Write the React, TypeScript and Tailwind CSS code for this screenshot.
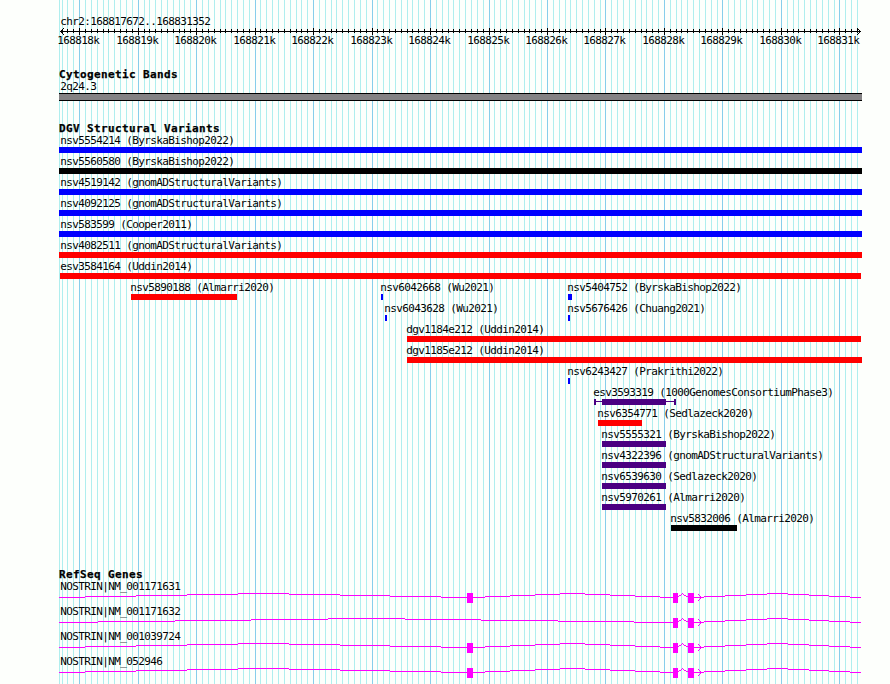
const REGION_START = 168817672;
const REGION_END = 168831352;
const toX = (pos: number) =>
  Math.round(60 + ((pos - REGION_START) * 800) / (REGION_END - REGION_START + 1));

const minorTicks = Array.from({ length: 137 }, (_, i) => 168817700 + i * 100);
const majorTicks = Array.from({ length: 14 }, (_, i) => 168818000 + i * 1000);

type Feature = {
  label: string;
  start: number;
  end: number;
  color: string;
  labelX?: number;
  whiskers?: [number, number];
};

const BLUE = "bg-[#0000ff]";
const RED = "bg-[#ff0000]";
const BLACK = "bg-black";
const INDIGO = "bg-[#4b0082]";

const variantRows: Feature[][] = [
  [{ label: "nsv5554214 (ByrskaBishop2022)", start: 59, end: 862, color: BLUE, labelX: 60 }],
  [{ label: "nsv5560580 (ByrskaBishop2022)", start: 59, end: 862, color: BLACK, labelX: 60 }],
  [{ label: "nsv4519142 (gnomADStructuralVariants)", start: 59, end: 862, color: BLUE, labelX: 60 }],
  [{ label: "nsv4092125 (gnomADStructuralVariants)", start: 59, end: 862, color: BLUE, labelX: 60 }],
  [{ label: "nsv583599 (Cooper2011)", start: 59, end: 862, color: BLUE, labelX: 60 }],
  [{ label: "nsv4082511 (gnomADStructuralVariants)", start: 59, end: 862, color: RED, labelX: 60 }],
  [{ label: "esv3584164 (Uddin2014)", start: 60, end: 861, color: RED, labelX: 60 }],
  [
    { label: "nsv5890188 (Almarri2020)", start: 131, end: 237, color: RED },
    { label: "nsv6042668 (Wu2021)", start: 381, end: 383, color: BLUE },
    { label: "nsv5404752 (ByrskaBishop2022)", start: 568, end: 572, color: BLUE },
  ],
  [
    { label: "nsv6043628 (Wu2021)", start: 385, end: 387, color: BLUE },
    { label: "nsv5676426 (Chuang2021)", start: 568, end: 570, color: BLUE },
  ],
  [{ label: "dgv1184e212 (Uddin2014)", start: 407, end: 861, color: RED }],
  [{ label: "dgv1185e212 (Uddin2014)", start: 407, end: 862, color: RED }],
  [{ label: "nsv6243427 (Prakrithi2022)", start: 568, end: 570, color: BLUE }],
  [
    {
      label: "esv3593319 (1000GenomesConsortiumPhase3)",
      start: 602,
      end: 666,
      color: INDIGO,
      labelX: 593,
      whiskers: [594, 676],
    },
  ],
  [{ label: "nsv6354771 (Sedlazeck2020)", start: 598, end: 642, color: RED }],
  [{ label: "nsv5555321 (ByrskaBishop2022)", start: 602, end: 666, color: INDIGO }],
  [{ label: "nsv4322396 (gnomADStructuralVariants)", start: 602, end: 666, color: INDIGO }],
  [{ label: "nsv6539630 (Sedlazeck2020)", start: 602, end: 666, color: INDIGO }],
  [{ label: "nsv5970261 (Almarri2020)", start: 602, end: 666, color: INDIGO }],
  [{ label: "nsv5832006 (Almarri2020)", start: 671, end: 737, color: BLACK }],
];

// Each intron is a shallow staircase: [x where the level begins, level].
const longIntron: [number, number][] = [
  [59, 4], [98, 3], [175, 2], [251, 1], [328, 0], [405, 1], [481, 2], [558, 3], [634, 4], [673, 4],
];
const leftIntron: [number, number][] = [
  [59, 4], [85, 3], [136, 2], [187, 1], [238, 0], [289, 1], [340, 2], [390, 3], [441, 4], [467, 4],
];
const middleIntron: [number, number][] = [
  [473, 4], [485, 3], [510, 2], [535, 1], [560, 0], [585, 1], [610, 2], [635, 3], [660, 4], [673, 4],
];
const rightIntron: [number, number][] = [
  [694, 4], [704, 3], [725, 2], [746, 1], [767, 0], [788, 1], [809, 2], [829, 3], [850, 4], [861, 4],
];

const genes = [
  { name: "NOSTRIN|NM_001171631", extraExon: true },
  { name: "NOSTRIN|NM_001171632", extraExon: false },
  { name: "NOSTRIN|NM_001039724", extraExon: true },
  { name: "NOSTRIN|NM_052946", extraExon: true },
];

function Grid() {
  return (
    <svg className="absolute inset-0" width="890" height="684" shapeRendering="crispEdges">
      <rect x="59" y="0" width="1" height="684" fill="#afeeee" />
      {minorTicks.map((p) => (
        <rect
          key={p}
          x={toX(p)}
          y="0"
          width="1"
          height="684"
          fill={p % 1000 === 0 ? "#87ceeb" : "#afeeee"}
        />
      ))}
    </svg>
  );
}

function Label({ text, x }: { text: string; x: number }) {
  return (
    <div
      className="h-[13px] pl-[0.3px] text-[11px] leading-[13px] tracking-[-0.622px] whitespace-pre"
      style={{ marginLeft: x }}
    >
      {text}
    </div>
  );
}

function Heading({ text }: { text: string }) {
  return (
    <h2 className="ml-[59px] h-3 text-[11px] leading-[13px] font-bold tracking-[0.378px] whitespace-pre [-webkit-text-stroke:0.25px_black]">
      {text}
    </h2>
  );
}

// A small open arrowhead drawn pixel by pixel, from its tip outwards.
function Arrowhead({ x, y, dir }: { x: number; y: number; dir: 1 | -1 }) {
  return (
    <>
      {[0, 1, 2, 3].map((d) => (
        <g key={d}>
          <rect x={x - dir * d} y={y - d} width="1" height="1" />
          <rect x={x - dir * d} y={y + d} width="1" height="1" />
        </g>
      ))}
    </>
  );
}

function Ruler() {
  return (
    <header className="pt-[15px]">
      <Label text="chr2:168817672..168831352" x={60} />
      <svg className="block" width="890" height="7" shapeRendering="crispEdges">
        <rect x="60" y="3" width="801" height="1" />
        {minorTicks.map((p) =>
          p % 1000 === 0 ? (
            <rect key={p} x={toX(p)} y="0" width="1" height="7" />
          ) : (
            <rect key={p} x={toX(p)} y="1" width="1" height="4" />
          ),
        )}
        <Arrowhead x={60} y={3} dir={-1} />
        <Arrowhead x={860} y={3} dir={1} />
      </svg>
      <div className="-mt-px mb-px grid h-[13px]">
        {majorTicks.map((p) => (
          <div key={p} className="[grid-area:1/1]">
            <Label text={`${p / 1000}k`} x={toX(p) - 22} />
          </div>
        ))}
      </div>
    </header>
  );
}

function Variant({ f }: { f: Feature }) {
  return (
    <div className="[grid-area:1/1]">
      <Label text={f.label} x={f.labelX ?? f.start - 1} />
      {f.whiskers ? (
        <div
          className="flex h-1.5 items-center justify-between"
          style={{ marginLeft: f.whiskers[0], width: f.whiskers[1] - f.whiskers[0] }}
        >
          <div className="h-1.5 w-0.5 bg-[#4b0082]" />
          <div className="mb-px h-px w-1.5 bg-[#4b0082]" />
          <div className={`h-1.5 ${f.color}`} style={{ width: f.end - f.start }} />
          <div className="mb-px h-px w-2 bg-[#4b0082]" />
          <div className="h-1.5 w-0.5 bg-[#4b0082]" />
        </div>
      ) : (
        <div className={`h-1.5 ${f.color}`} style={{ marginLeft: f.start, width: f.end - f.start }} />
      )}
    </div>
  );
}

function Intron({ steps }: { steps: [number, number][] }) {
  return (
    <>
      {steps.slice(0, -1).map(([x, y], i) => (
        <rect key={x} x={x} y={y} width={steps[i + 1][0] - x} height="1" />
      ))}
    </>
  );
}

function Gene({ name, extraExon }: { name: string; extraExon: boolean }) {
  return (
    <div className="h-[25px]">
      <Label text={name} x={60} />
      <svg className="block" width="890" height="10" fill="#ff00ff" shapeRendering="crispEdges">
        {extraExon ? (
          <>
            <Intron steps={leftIntron} />
            <rect x="467" y="0" width="6" height="10" />
            <Intron steps={middleIntron} />
          </>
        ) : (
          <Intron steps={longIntron} />
        )}
        <rect x="673" y="0" width="5" height="10" />
        <path d="M678 3h1v1h-1zM679 2h2v1h-2zM681 1h1v1h-1zM682 0h1v1h-1zM683 1h1v1h-1zM684 2h2v1h-2zM686 3h2v1h-2z" />
        <rect x="688" y="0" width="6" height="10" />
        <Intron steps={rightIntron} />
        <Arrowhead x={701} y={4} dir={1} />
      </svg>
    </div>
  );
}

export default function App() {
  return (
    <div className="relative h-[684px] w-[890px] overflow-hidden bg-[#fdfffc] font-['DejaVu_Sans_Mono','Liberation_Mono',monospace] text-black">
      <Grid />
      <main className="relative flex flex-col">
        <Ruler />
        <section className="mt-5">
          <Heading text="Cytogenetic Bands" />
          <Label text="2q24.3" x={60} />
          <div className="ml-[59px] h-2 w-[803px] border-y border-black bg-[#848284]" />
        </section>
        <section className="mt-[21px]">
          <Heading text="DGV Structural Variants" />
          {variantRows.map((row, i) => (
            <div key={i} className="grid h-[21px]">
              {row.map((f) => (
                <Variant key={f.label} f={f} />
              ))}
            </div>
          ))}
        </section>
        <section className="mt-[35px]">
          <Heading text="RefSeq Genes" />
          {genes.map((g) => (
            <Gene key={g.name} name={g.name} extraExon={g.extraExon} />
          ))}
        </section>
      </main>
    </div>
  );
}
